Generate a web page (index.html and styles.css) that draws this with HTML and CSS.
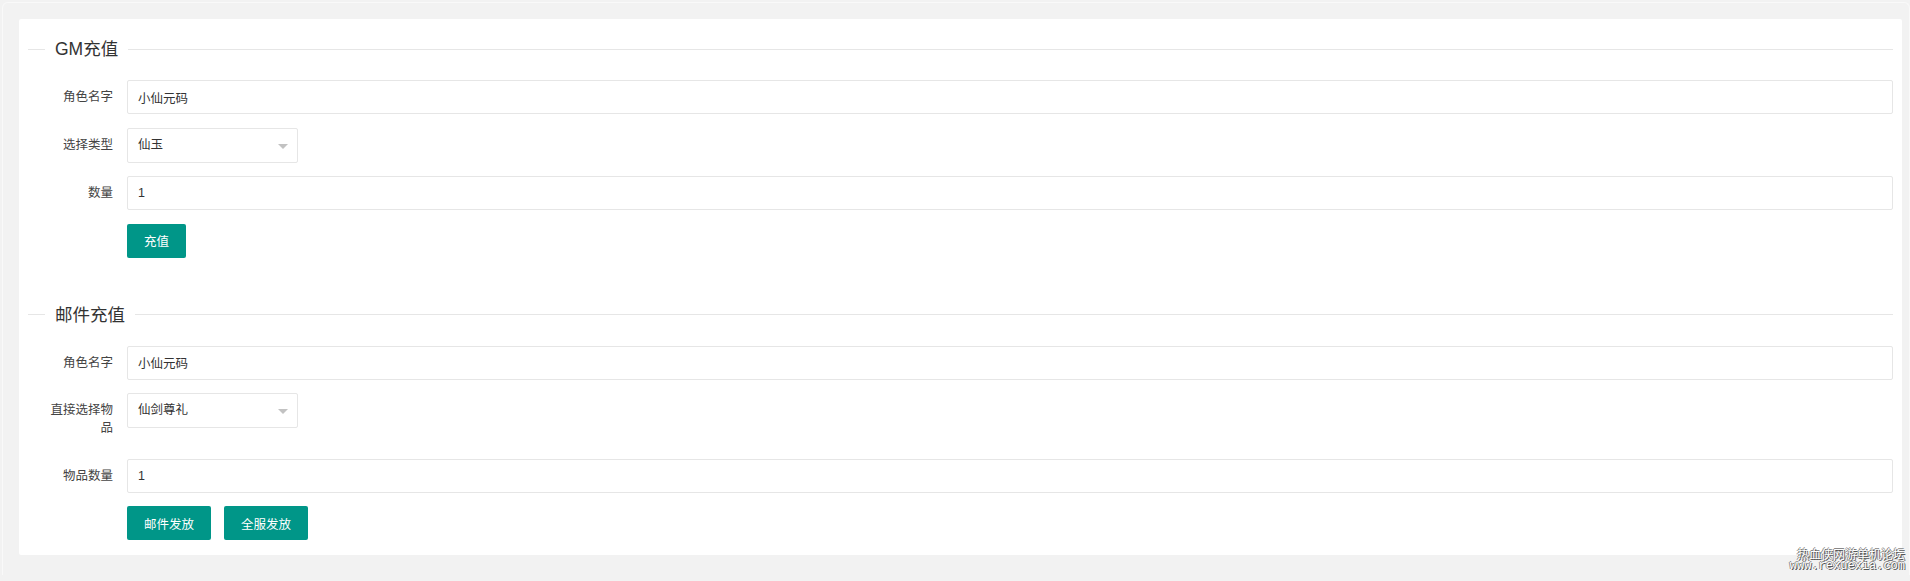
FILE: index.html
```html
<!DOCTYPE html>
<html>
<head>
  <meta charset="utf-8">
  <title>GM充值</title>
  <link rel="stylesheet" href="styles.css">
</head>
<body>

  <div class="frame">
    <div class="card">

      <!-- GM充值 -->
      <div class="section-title"><span>GM充值</span></div>
      <div class="form-item">
        <label class="form-label">角色名字</label>
        <div class="form-block"><input class="input" type="text" value="小仙元码"></div>
      </div>
      <div class="form-item">
        <label class="form-label">选择类型</label>
        <div class="select">
          <span>仙玉</span>
          <i class="arrow"></i>
        </div>
      </div>
      <div class="form-item">
        <label class="form-label">数量</label>
        <div class="form-block"><input class="input" type="text" value="1"></div>
      </div>
      <div class="form-item">
        <label class="form-label"></label>
        <button class="btn">充值</button>
      </div>

      <!-- 邮件充值 -->
      <div class="section-title second"><span>邮件充值</span></div>
      <div class="form-item">
        <label class="form-label">角色名字</label>
        <div class="form-block"><input class="input" type="text" value="小仙元码"></div>
      </div>
      <div class="form-item">
        <label class="form-label">直接选择物品</label>
        <div class="select">
          <span>仙剑尊礼</span>
          <i class="arrow"></i>
        </div>
      </div>
      <div class="form-item">
        <label class="form-label">物品数量</label>
        <div class="form-block"><input class="input" type="text" value="1"></div>
      </div>
      <div class="form-item last">
        <label class="form-label"></label>
        <button class="btn">邮件发放</button>
        <button class="btn">全服发放</button>
      </div>

    </div>
  </div>

  <div class="watermark">
    <div class="wm-cn">热血侠网游单机论坛</div>
    <div class="wm-en">www.rexuexia.com</div>
  </div>

</body>
</html>
```

FILE: styles.css
```css
body {
  margin: 0;
  background-color: #f2f2f2;
  font-family: "Liberation Sans", "Noto Sans CJK SC", sans-serif;
  color: #333;
}

.frame {
  margin: 2px 0 0 2px;
  padding: 16px 5px 20px 16px;
  border: 1px solid #f9f9f9;
  border-bottom: none;
  border-radius: 6px 6px 0 0;
}

.card {
  width: 1865px;
  padding: 18px 9px 0.5px 9px;
  background-color: #fff;
  border-radius: 2px;
}

.section-title {
  display: flex;
  align-items: center;
  height: 24px;
  margin-bottom: 19px;
  font-size: 17.5px;
  color: #333;
}

.section-title::before {
  content: "";
  width: 17px;
  border-top: 1px solid #e6e6e6;
}

.section-title::after {
  content: "";
  flex: 1;
  border-top: 1px solid #e6e6e6;
}

.section-title span {
  padding: 0 10px;
  line-height: 24px;
}

.section-title.second {
  margin-top: 45px;
}

.form-item {
  display: flex;
  align-items: flex-start;
  margin-bottom: 13.5px;
}

.form-label {
  box-sizing: border-box;
  width: 99px;
  flex-shrink: 0;
  padding: 8px 14px 8px 13px;
  font-size: 12.5px;
  line-height: 18px;
  text-align: right;
  color: #444;
}

.form-block {
  flex: 1;
}

.input {
  box-sizing: border-box;
  display: block;
  width: 100%;
  height: 34px;
  padding: 0 10px;
  border: 1px solid #e6e6e6;
  border-radius: 2px;
  font-family: "Liberation Sans", "Noto Sans CJK SC", sans-serif;
  font-size: 12.5px;
  color: #333;
  outline: none;
}

.select {
  position: relative;
  box-sizing: border-box;
  width: 171px;
  height: 35px;
  padding: 0 10px;
  border: 1px solid #e6e6e6;
  border-radius: 2px;
  font-size: 12.5px;
  line-height: 33px;
  color: #333;
}

.arrow {
  position: absolute;
  right: 9px;
  top: 15px;
  width: 0;
  height: 0;
  border-left: 5px solid transparent;
  border-right: 5px solid transparent;
  border-top: 5px solid #c2c2c2;
}

.btn {
  height: 34px;
  padding: 0 17px;
  margin-right: 13px;
  border: none;
  border-radius: 2px;
  background-color: #009688;
  color: #fff;
  font-family: "Liberation Sans", "Noto Sans CJK SC", sans-serif;
  font-size: 12.5px;
  cursor: pointer;
}

.form-item.last {
  margin-bottom: 14px;
}

.watermark {
  position: absolute;
  right: 5px;
  top: 547px;
  text-align: right;
  color: #fff;
  text-shadow: 1px 1px 0 #555, -1px 0 0 #888, 0 -1px 0 #888;
}

.wm-cn {
  font-family: "Noto Sans CJK SC", sans-serif;
  font-size: 12px;
  line-height: 14px;
}

.wm-en {
  font-family: "Liberation Mono", monospace;
  font-size: 12px;
  line-height: 10px;
}
```
